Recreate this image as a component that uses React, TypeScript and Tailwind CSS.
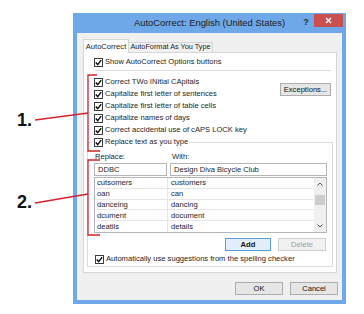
import React from 'react';

const Check: React.FC = () => (
  <span className="w-[9px] h-[9px] shrink-0 border border-[#3c3c3c] bg-white flex items-center justify-center">
    <svg width="7" height="7" viewBox="0 0 7 7">
      <path d="M0.8 3.6 L2.7 5.6 L6.2 1.1" stroke="#111" strokeWidth="1.5" fill="none" />
    </svg>
  </span>
);

const CheckRow: React.FC<{ label: string; className?: string }> = ({ label, className = '' }) => (
  <div className={`flex items-center gap-[2px] ${className}`}>
    <Check />
    <span className="whitespace-nowrap">{label}</span>
  </div>
);

const Btn: React.FC<{ label: string; w: string; kind?: 'default' | 'disabled' | 'normal' }> = ({
  label,
  w,
  kind = 'normal',
}) => {
  const look =
    kind === 'default'
      ? 'border-[#5b9bd8] bg-[#e3eefa] text-[#111] font-semibold'
      : kind === 'disabled'
      ? 'border-[#cfcfcf] bg-[#f1f1f1] text-[#9c9c9c]'
      : 'border-[#adadad] bg-[#e6e6e6] text-[#111]';
  return (
    <div className={`${w} h-[13px] border flex items-center justify-center leading-none ${look}`}>{label}</div>
  );
};

const rows: [string, string][] = [
  ['cutsomers', 'customers'],
  ['oan', 'can'],
  ['danceing', 'dancing'],
  ['dcument', 'document'],
  ['deatils', 'details'],
];

export default function App() {
  return (
    <div className="relative w-[364px] h-[314px] bg-white overflow-hidden pl-[73px] pt-[13px] text-[7.6px] text-[#1e1e1e] font-['Liberation_Sans',Arial,sans-serif]">
      {/* window */}
      <div className="w-[273px] h-[291px] bg-[#6fa8e8] flex flex-col px-[4px] pb-[4px]">
        {/* title bar */}
        <div className="h-[20px] -mx-[4px] flex items-start">
          <div className="w-[48px]" />
          <div className="flex-1 h-[20px] flex items-center justify-center text-[9.4px] text-[#1a1a1a] whitespace-nowrap">
            AutoCorrect: English (United States)
          </div>
          <div className="w-[48px] flex items-start pt-[1px]">
            <div className="w-[16px] h-[15px] flex items-center justify-center text-[9px] font-bold text-[#2a2a2a] pt-[2px]">
              ?
            </div>
            <div className="w-[29px] h-[13px] bg-[#c9504f] flex items-center justify-center">
              <svg width="7" height="7" viewBox="0 0 7 7">
                <path d="M1 1 L6 6 M6 1 L1 6" stroke="#fff" strokeWidth="1.3" />
              </svg>
            </div>
          </div>
        </div>

        {/* client */}
        <div className="flex-1 bg-[#f0f0f0] pl-[6px] pr-[4px] pt-[6px] flex flex-col">
          {/* tabs */}
          <div className="flex items-end h-[14px]">
            <div className="relative z-10 w-[46px] h-[14px] bg-white border border-b-0 border-[#d6d6d6] flex items-center justify-center whitespace-nowrap">
              AutoCorrect
            </div>
            <div className="w-[84px] h-[10px] mb-px bg-[#f0f0f0] border border-l-0 border-b-0 border-[#d6d6d6] flex items-center justify-center whitespace-nowrap text-[7.3px] overflow-hidden">
              AutoFormat As You Type
            </div>
          </div>

          {/* panel */}
          <div className="-mt-[1px] w-[254px] h-[221px] border border-[#d6d6d6] bg-white flex flex-col">
            <CheckRow label="Show AutoCorrect Options buttons" className="mt-[4px] h-[10px] ml-[10px]" />
            <div className="mt-[3px] h-px bg-[#dcdcdc] ml-[11px] mr-[5px]" />

            <div className="mt-[5px] ml-[10px] mr-[5px] flex justify-between">
              <div className="flex flex-col">
                <CheckRow label="Correct TWo INitial CApitals" className="h-[12px]" />
                <CheckRow label="Capitalize first letter of sentences" className="h-[12px]" />
                <CheckRow label="Capitalize first letter of table cells" className="h-[12px]" />
                <CheckRow label="Capitalize names of days" className="h-[12px]" />
                <CheckRow label="Correct accidental use of cAPS LOCK key" className="h-[12px]" />
              </div>
              <div className="mt-[7px]">
                <Btn label="Exceptions..." w="w-[51px]" />
              </div>
            </div>

            <fieldset className="ml-[3px] w-[246px] border border-[#dcdcdc] pl-[6px] pr-[5px] pb-[2px]">
              <legend className="-ml-[1px] px-[1px] h-[12px] flex items-center gap-[2px]">
                <Check />
                <span className="whitespace-nowrap">Replace text as you type</span>
              </legend>

              <div className="mt-[4px] h-[10px] flex items-center">
                <span className="w-[76px] pl-px">Replace:</span>
                <span className="pl-[2px]">With:</span>
              </div>

              <div className="mt-[1px] flex gap-[3px]">
                <div className="w-[73px] h-[13px] border border-[#b5b5b5] flex items-center pl-[3px]">DDBC</div>
                <div className="w-[157px] h-[13px] border border-[#b5b5b5] flex items-center pl-[3px]">
                  Design Diva Bicycle Club
                </div>
              </div>

              <div className="mt-[1px] w-[233px] h-[56px] border border-[#b5b5b5] flex">
                <div className="flex-1 flex flex-col">
                  {rows.map(([a, b]) => (
                    <div key={a} className="h-[10.8px] flex border-b border-[#e6e6e6] last:border-b-0">
                      <div className="w-[73px] border-r border-[#e6e6e6] pl-[2px] flex items-center">{a}</div>
                      <div className="flex-1 pl-[3px] flex items-center">{b}</div>
                    </div>
                  ))}
                </div>
                <div className="w-[12px] bg-[#f0f0f0] flex flex-col items-center">
                  <div className="h-[12px] flex items-center justify-center">
                    <svg width="6" height="4" viewBox="0 0 6 4">
                      <path d="M0.5 3.5 L3 1 L5.5 3.5" stroke="#555" strokeWidth="1" fill="none" />
                    </svg>
                  </div>
                  <div className="mt-[5px] w-[10px] h-[10px] bg-[#cdcdcd]" />
                  <div className="flex-1" />
                  <div className="h-[12px] flex items-center justify-center">
                    <svg width="6" height="4" viewBox="0 0 6 4">
                      <path d="M0.5 0.5 L3 3 L5.5 0.5" stroke="#555" strokeWidth="1" fill="none" />
                    </svg>
                  </div>
                </div>
              </div>

              <div className="mt-[5px] mr-px flex justify-end gap-[7px]">
                <Btn label="Add" w="w-[46px]" kind="default" />
                <Btn label="Delete" w="w-[48px]" kind="disabled" />
              </div>

              <CheckRow
                label="Automatically use suggestions from the spelling checker"
                className="mt-[3px] h-[10px] ml-px"
              />
            </fieldset>
          </div>

          {/* dialog buttons */}
          <div className="mt-[9px] flex justify-end gap-[7px]">
            <Btn label="OK" w="w-[48px]" />
            <Btn label="Cancel" w="w-[48px]" />
          </div>
        </div>
      </div>

      {/* annotations */}
      <svg className="absolute inset-0 pointer-events-none" width="364" height="314">
        <g stroke="#d3222a" strokeWidth="1.3" fill="none">
          <path d="M97 75 L88 75 L88 151 L100 151" />
          <path d="M35 120 L88 113" />
          <path d="M100 160 L88 160 L88 235 L100 235" />
          <path d="M35 203 L88 194" />
        </g>
      </svg>
      <div className="absolute left-[17px] top-[110.5px] text-[18px] leading-none font-bold text-[#111]">1.</div>
      <div className="absolute left-[17px] top-[192.5px] text-[18px] leading-none font-bold text-[#111]">2.</div>
    </div>
  );
}
